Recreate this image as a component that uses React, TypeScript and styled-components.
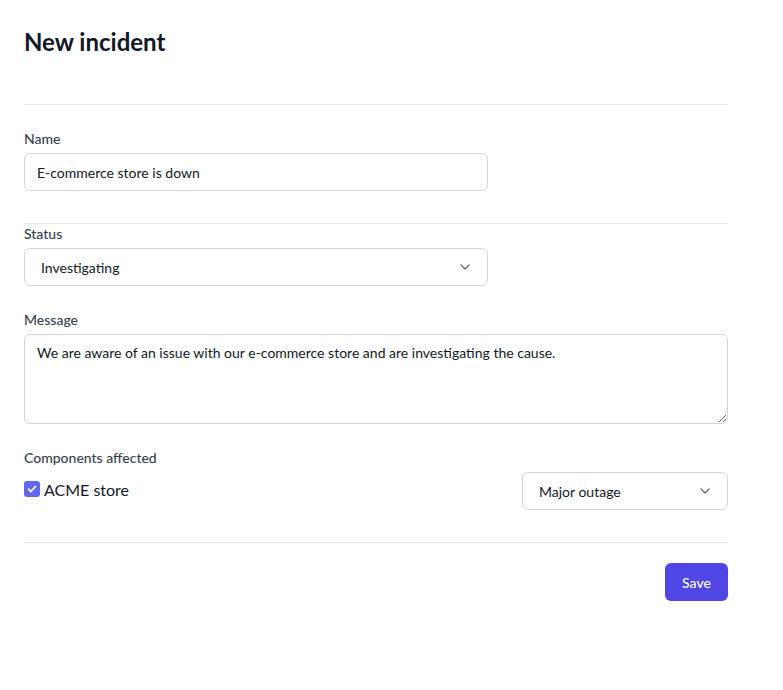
import React from "react";
import styled, { createGlobalStyle } from "styled-components";

const Global = createGlobalStyle`
  html, body { margin: 0; padding: 0; background: #ffffff; }
  body { font-family: Lato, "Noto Sans", sans-serif; color: #111827; }
  * { box-sizing: border-box; }
`;

const Page = styled.div`
  width: 752px;
  padding: 24px 24px 40px 24px;
`;

const Form = styled.form`
  width: 704px;
  display: flex;
  flex-direction: column;
`;

const Title = styled.h1`
  margin: 0;
  font-size: 24px;
  line-height: 36px;
  font-weight: 700;
  color: #111827;
  padding-bottom: 44px;
  border-bottom: 1px solid #e5e7eb;
`;

const Section = styled.div<{ $top: number; $divider?: boolean; $gap?: number }>`
  display: flex;
  flex-direction: column;
  gap: 4px;
  padding-top: ${(p) => p.$top}px;
  margin-top: ${(p) => p.$gap ?? 0}px;
  ${(p) => (p.$divider ? "border-top: 1px solid #e5e7eb;" : "")}
`;

const Label = styled.label`
  font-size: 14px;
  line-height: 20px;
  color: #374151;
  font-weight: 500;
`;

const TextInput = styled.input`
  width: 464px;
  height: 38px;
  border: 1px solid #d1d5db;
  border-radius: 6px;
  padding: 0 12px;
  font-family: inherit;
  font-size: 14px;
  color: #111827;
  background: #fff;
  outline: none;
`;

const SelectBox = styled.div<{ $width: number }>`
  width: ${(p) => p.$width}px;
  height: 38px;
  border: 1px solid #d1d5db;
  border-radius: 6px;
  padding: 0 12px 0 16px;
  display: flex;
  align-items: center;
  justify-content: space-between;
  font-size: 14px;
  color: #111827;
  background: #fff;
`;

const Chevron = () => (
  <svg width="20" height="20" viewBox="0 0 20 20" fill="none">
    <path d="M6 8l4 4 4-4" stroke="#6b7280" strokeWidth="1.5" strokeLinecap="round" strokeLinejoin="round" />
  </svg>
);

const TextArea = styled.textarea`
  width: 704px;
  height: 90px;
  border: 1px solid #d1d5db;
  border-radius: 6px;
  padding: 8px 12px;
  font-family: inherit;
  font-size: 14px;
  line-height: 20px;
  color: #111827;
  resize: vertical;
  outline: none;
`;

const ComponentRow = styled.div`
  display: flex;
  align-items: center;
  justify-content: space-between;
  padding-bottom: 32px;
  border-bottom: 1px solid #e5e7eb;
`;

const CheckLabel = styled.div`
  display: flex;
  align-items: center;
  gap: 4px;
  font-size: 16px;
  color: #111827;
  margin-top: -4px;
`;

const Check = styled.span`
  width: 16px;
  height: 16px;
  border-radius: 3px;
  background: #6366f1;
  display: inline-flex;
  align-items: center;
  justify-content: center;
`;

const Footer = styled.div`
  display: flex;
  justify-content: flex-end;
  padding-top: 20px;
`;

const SaveButton = styled.button`
  width: 63px;
  height: 38px;
  border: none;
  border-radius: 6px;
  background: #4f46e5;
  color: #ffffff;
  font-family: inherit;
  font-size: 14px;
  font-weight: 500;
`;

export default function App() {
  return (
    <Page>
      <Global />
      <Form onSubmit={(e) => e.preventDefault()}>
        <Title>New incident</Title>
        <Section $top={24}>
          <Label>Name</Label>
          <TextInput defaultValue="E-commerce store is down" />
        </Section>
        <Section $top={0} $divider $gap={32}>
          <Label>Status</Label>
          <SelectBox $width={464}>
            <span>Investigating</span>
            <Chevron />
          </SelectBox>
        </Section>
        <Section $top={24}>
          <Label>Message</Label>
          <TextArea defaultValue="We are aware of an issue with our e-commerce store and are investigating the cause." />
        </Section>
        <Section $top={24}>
          <Label>Components affected</Label>
          <ComponentRow>
            <CheckLabel>
              <Check>
                <svg width="12" height="12" viewBox="0 0 12 12" fill="none">
                  <path d="M2.5 6.2l2.3 2.3L9.5 3.5" stroke="#fff" strokeWidth="1.8" strokeLinecap="round" strokeLinejoin="round" />
                </svg>
              </Check>
              ACME store
            </CheckLabel>
            <SelectBox $width={206}>
              <span>Major outage</span>
              <Chevron />
            </SelectBox>
          </ComponentRow>
        </Section>
        <Footer>
          <SaveButton type="submit">Save</SaveButton>
        </Footer>
      </Form>
    </Page>
  );
}
